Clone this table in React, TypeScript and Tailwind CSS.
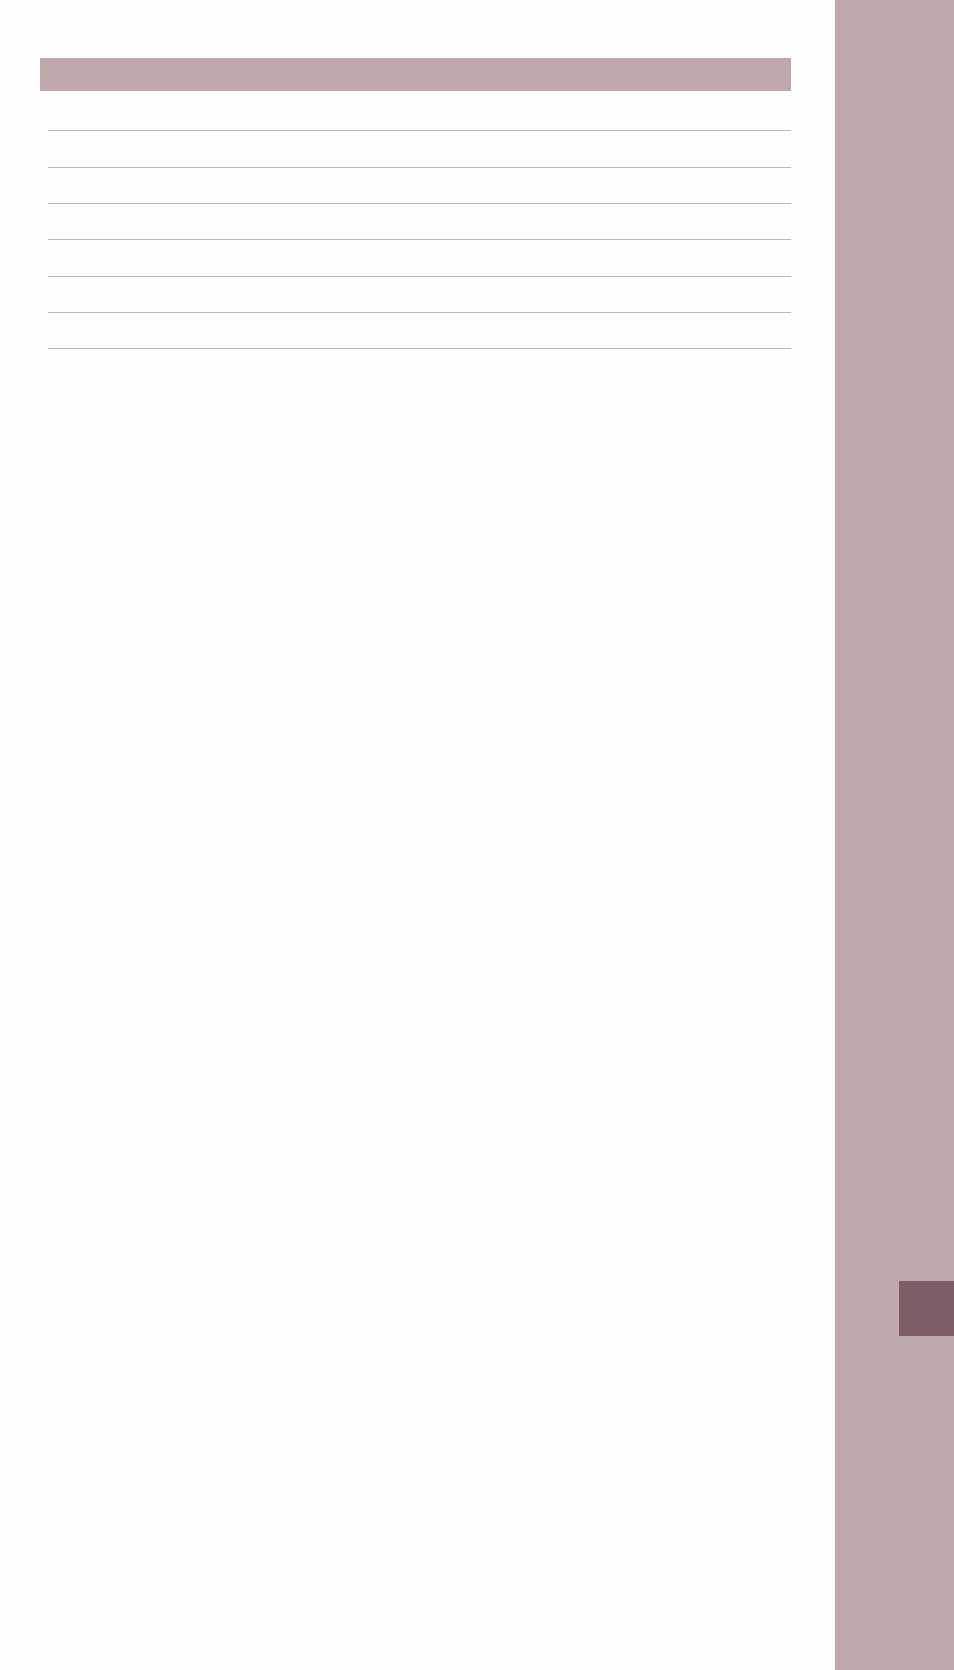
export default function App() {
  const rows = [0, 1, 2, 3, 4, 5, 6];

  return (
    <div className="flex min-h-[1670px] w-full bg-[#fdfdfd] font-['Liberation_Sans',sans-serif]">
      <main className="flex-1 pt-[58px] pl-10 pr-[44px]">
        <div className="h-[33px] bg-[#bfa9aa]" />
        <ul className="ml-2 mt-[4px]">
          {rows.map((r) => (
            <li key={r} className="h-[36.33px] border-b border-[#b8b8b8]" />
          ))}
        </ul>
      </main>
      <aside className="flex w-[119px] shrink-0 flex-col bg-[#bfa9aa]">
        <div className="ml-auto mt-[1281px] h-[55px] w-[55px] bg-[#7e5d66]" />
      </aside>
    </div>
  );
}
